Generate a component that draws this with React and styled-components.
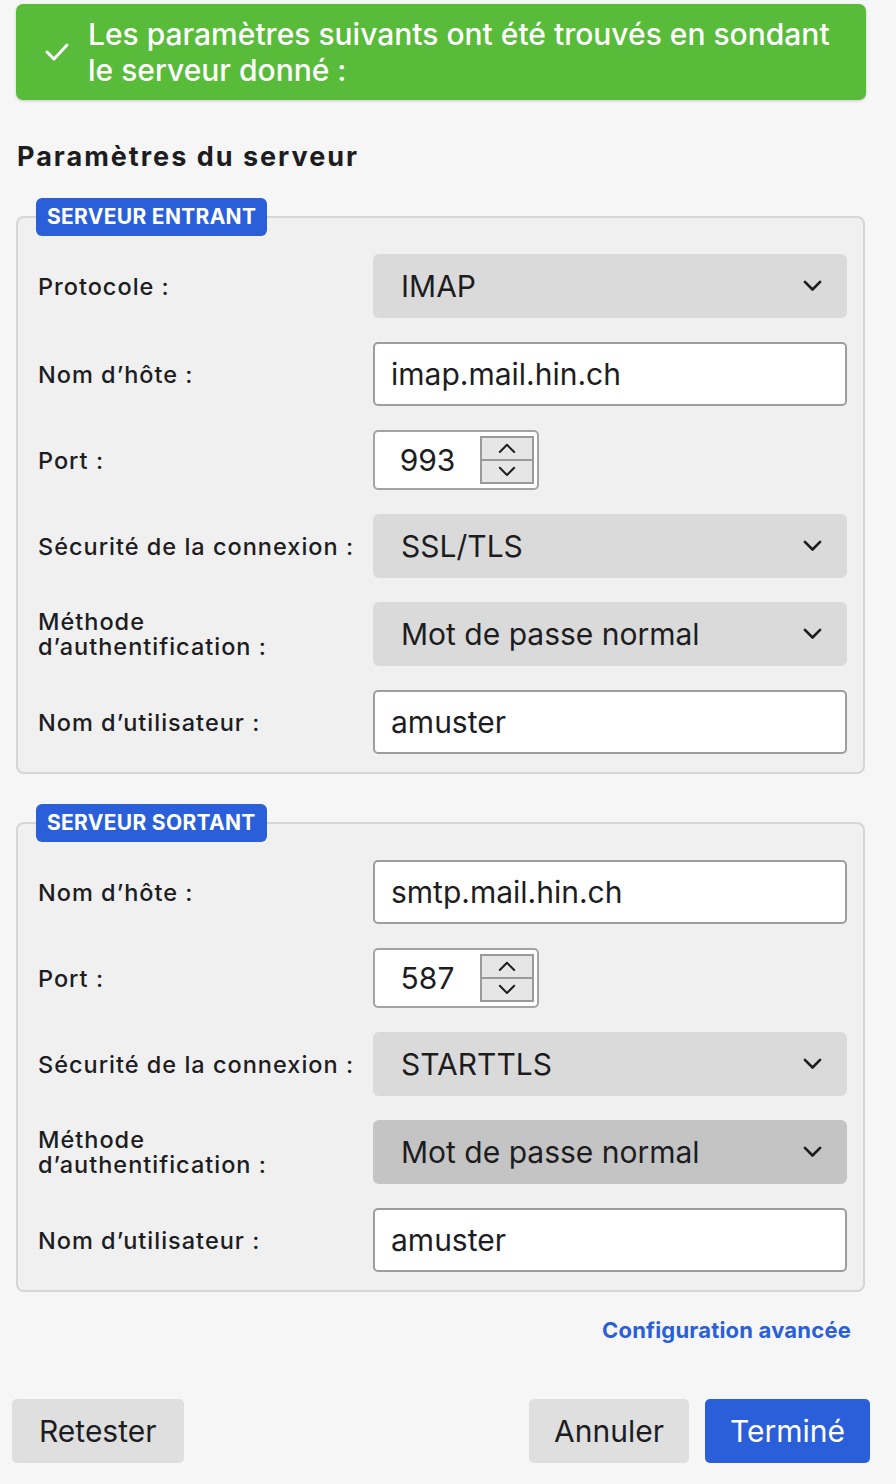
import React from 'react';
import styled, { createGlobalStyle } from 'styled-components';

const GlobalStyle = createGlobalStyle`
  html, body {
    margin: 0;
    padding: 0;
    background: #f6f6f6;
  }
  body {
    font-family: Inter, "Noto Sans", sans-serif;
    color: #1d1d1f;
  }
`;

const Page = styled.div`
  width: 896px;
  min-height: 1484px;
  box-sizing: border-box;
  padding-top: 4px;
  display: flex;
  flex-direction: column;
`;

const Banner = styled.div`
  margin: 0 30px 0 16px;
  background: #58bb39;
  border-radius: 7px;
  box-shadow: 0 1px 3px rgba(0, 0, 0, 0.18);
  display: flex;
  align-items: center;
  padding: 12px 16px 12px 28px;
  gap: 18px;
  color: #fff;
  font-size: 30px;
  font-weight: 500;
  line-height: 36px;
`;

const Heading = styled.h2`
  margin: 42px 0 0 17px;
  font-size: 27px;
  font-weight: 700;
  letter-spacing: 2px;
  line-height: 30px;
  color: #1d1d1f;
`;

const Group = styled.fieldset`
  margin: ${({ $top }) => $top}px 31px 0 16px;
  padding: 18px 19px 18px 20px;
  border: 2px solid #d6d6d6;
  border-radius: 8px;
  background: #f0f0f0;
  display: flex;
  flex-direction: column;
  gap: 24px;
  min-width: 0;
`;

const Legend = styled.legend`
  margin-left: -2px;
  padding: 0 11px;
  height: 38px;
  line-height: 38px;
  background: #2a5fd9;
  color: #fff;
  border-radius: 6px;
  font-size: 21px;
  font-weight: 700;
  letter-spacing: 0.3px;
`;

const Row = styled.div`
  display: grid;
  grid-template-columns: 335px 474px;
  align-items: center;
`;

const Label = styled.label`
  font-size: 23.5px;
  font-weight: 500;
  letter-spacing: 1px;
  line-height: 25px;
  color: #1d1d1f;
`;

const Select = styled.div`
  height: 64px;
  box-sizing: border-box;
  border-radius: 6px;
  background: ${({ $hover }) => ($hover ? '#c4c4c4' : '#dadada')};
  display: flex;
  align-items: center;
  justify-content: space-between;
  padding: 0 25px 0 28px;
  font-size: 30px;
  font-weight: 400;
  color: #1d1d1f;
`;

const TextInput = styled.div`
  height: 64px;
  box-sizing: border-box;
  border: 2px solid #9d9d9d;
  border-radius: 5px;
  background: #fff;
  display: flex;
  align-items: center;
  padding: 0 16px;
  font-size: 30px;
  color: #1d1d1f;
`;

const PortBox = styled.div`
  width: 166px;
  height: 60px;
  box-sizing: border-box;
  border: 2px solid #a3a3a3;
  border-radius: 5px;
  background: #fff;
  display: flex;
  align-items: center;
  padding: 4px 3px 4px 0;
`;

const PortValue = styled.span`
  flex: 1;
  text-align: center;
  font-size: 30px;
  color: #1d1d1f;
`;

const Spinner = styled.div`
  width: 54px;
  height: 48px;
  display: flex;
  flex-direction: column;
  border: 2px solid #9a9a9a;
  box-sizing: border-box;
  background: #e6e6e6;
`;

const SpinHalf = styled.div`
  flex: 1;
  display: flex;
  align-items: center;
  justify-content: center;
  & + & {
    border-top: 2px solid #9a9a9a;
  }
`;

const AdvancedLink = styled.a`
  align-self: flex-end;
  margin: 25px 45px 0 0;
  font-size: 22px;
  font-weight: 700;
  letter-spacing: 0.2px;
  color: #2a5fd9;
  text-decoration: none;
  line-height: 26px;
`;

const Footer = styled.div`
  margin: 56px 26px 0 12px;
  display: flex;
  align-items: center;
  gap: 16px;
`;

const Spacer = styled.div`
  flex: 1;
`;

const Button = styled.button`
  height: 64px;
  padding: 0 ${({ $pad }) => $pad}px;
  border: none;
  border-radius: 5px;
  background: ${({ $primary }) => ($primary ? '#2a5fd9' : '#dfdfdf')};
  color: ${({ $primary }) => ($primary ? '#fff' : '#1d1d1f')};
  font-family: Inter, "Noto Sans", sans-serif;
  font-size: 30px;
  font-weight: 400;
`;

const Chevron = ({ up, size = 19, stroke = 2.8 }) => (
  <svg width={size} height={size * 0.6} viewBox="0 0 20 12" fill="none">
    <path
      d={up ? 'M2 10 L10 2 L18 10' : 'M2 2 L10 10 L18 2'}
      stroke="#1d1d1f"
      strokeWidth={stroke}
      strokeLinecap="round"
      strokeLinejoin="round"
    />
  </svg>
);

const Check = () => (
  <svg width="26" height="20" viewBox="0 0 26 20" fill="none">
    <path d="M3 10 L10 17 L23 3" stroke="#fff" strokeWidth="3" strokeLinecap="round" strokeLinejoin="round" />
  </svg>
);

const SelectField = ({ value, hover }) => (
  <Select $hover={hover}>
    <span>{value}</span>
    <Chevron />
  </Select>
);

const PortField = ({ value }) => (
  <PortBox>
    <PortValue>{value}</PortValue>
    <Spinner>
      <SpinHalf>
        <Chevron up size={18} stroke={2.2} />
      </SpinHalf>
      <SpinHalf>
        <Chevron size={18} stroke={2.2} />
      </SpinHalf>
    </Spinner>
  </PortBox>
);

const Field = ({ label, children }) => (
  <Row>
    <Label>{label}</Label>
    {children}
  </Row>
);

const App = () => (
  <Page>
    <GlobalStyle />
    <Banner>
      <Check />
      <span>
        Les paramètres suivants ont été trouvés en sondant
        <br />
        le serveur donné :
      </span>
    </Banner>

    <Heading>Paramètres du serveur</Heading>

    <Group $top={26}>
      <Legend>SERVEUR ENTRANT</Legend>
      <Field label="Protocole :">
        <SelectField value="IMAP" />
      </Field>
      <Field label="Nom d’hôte :">
        <TextInput>imap.mail.hin.ch</TextInput>
      </Field>
      <Field label="Port :">
        <PortField value="993" />
      </Field>
      <Field label="Sécurité de la connexion :">
        <SelectField value="SSL/TLS" />
      </Field>
      <Field label={<>Méthode<br />d’authentification :</>}>
        <SelectField value="Mot de passe normal" />
      </Field>
      <Field label="Nom d’utilisateur :">
        <TextInput>amuster</TextInput>
      </Field>
    </Group>

    <Group $top={30}>
      <Legend>SERVEUR SORTANT</Legend>
      <Field label="Nom d’hôte :">
        <TextInput>smtp.mail.hin.ch</TextInput>
      </Field>
      <Field label="Port :">
        <PortField value="587" />
      </Field>
      <Field label="Sécurité de la connexion :">
        <SelectField value="STARTTLS" />
      </Field>
      <Field label={<>Méthode<br />d’authentification :</>}>
        <SelectField value="Mot de passe normal" hover />
      </Field>
      <Field label="Nom d’utilisateur :">
        <TextInput>amuster</TextInput>
      </Field>
    </Group>

    <AdvancedLink href="#">Configuration avancée</AdvancedLink>

    <Footer>
      <Button $pad={27}>Retester</Button>
      <Spacer />
      <Button $pad={25}>Annuler</Button>
      <Button $primary $pad={25}>Terminé</Button>
    </Footer>
  </Page>
);

export default App;
